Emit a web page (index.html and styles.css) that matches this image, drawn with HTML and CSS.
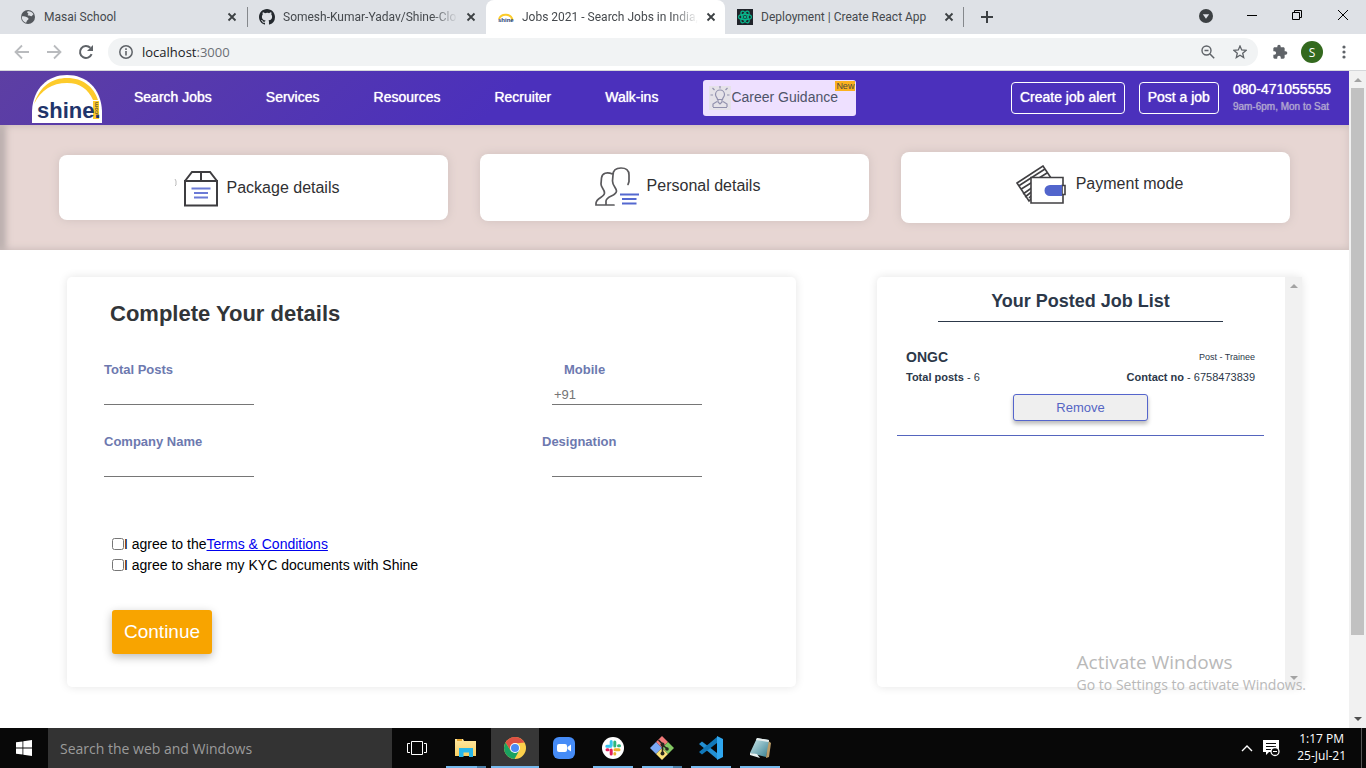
FILE: index.html
```html
<!DOCTYPE html>
<html lang="en">
<head>
<meta charset="utf-8">
<title>Jobs 2021 - Search Jobs in India</title>
<link rel="stylesheet" href="styles.css">
</head>
<body>
<svg class="defs" aria-hidden="true">
  <symbol id="close" viewBox="0 0 10 10"><path d="M1.5 1.5l7 7M8.500 1.500l-7 7" stroke="#3c4043" stroke-width="1.800" fill="none"/></symbol>
  <linearGradient id="note" x1="0" y1="0" x2="1" y2="1"><stop offset="0" stop-color="#d3eef0"/><stop offset="1" stop-color="#387f90"/></linearGradient>
  <linearGradient id="folder" x1="0" y1="0" x2="0" y2="1"><stop offset="0" stop-color="#ffe9a2"/><stop offset="1" stop-color="#f7cf62"/></linearGradient>
</svg>

<div class="tabs">
  <div class="tab">
    <svg class="tab-icon" viewBox="0 0 16 16"><circle cx="8" cy="8" r="7" fill="#54585d"/><path d="M1.800 7.500c1.500-.6 3.200-.3 4.700.5 1.200.6 2 .8 2 2 0 1-1.500 1-1.700 2-.2.800-.3 1.500-1 1.800C3.300 12.800 1.600 10.500 1.800 7.500zM7.500 2.500C9 1.800 12.500 3 13.500 5.500c-1 .2-1 1.200-2 1.700-1 .3-1.800-.7-3-.6-.9 0-1-.9-.3-1.300.7-.5-.2-.9-.7-1.300-.4-.5-.4-1.200 0-1.500z" fill="#dee1e6"/></svg>
    <span class="tab-title">Masai School</span>
    <button class="plain" aria-label="Close tab"><svg class="x"><use href="#close"/></svg></button>
  </div>
  <div class="tab ruled">
    <svg class="tab-icon" viewBox="0 0 16 16"><path fill="#24292e" d="M8 0C3.580 0 0 3.580 0 8c0 3.540 2.290 6.530 5.470 7.590.4.070.55-.17.55-.38 0-.19-.01-.82-.01-1.490-2.010.37-2.530-.49-2.690-.94-.09-.23-.48-.94-.82-1.130-.28-.15-.68-.52-.01-.53.63-.01 1.080.58 1.230.82.72 1.210 1.870.87 2.330.66.070-.52.280-.87.510-1.070-1.780-.2-3.640-.89-3.640-3.950 0-.87.310-1.590.82-2.150-.08-.2-.36-1.020.08-2.120 0 0 .67-.21 2.200.82A7.500 7.500 0 018 3.860c.68 0 1.360.09 2 .27 1.530-1.040 2.200-.82 2.200-.82.44 1.100.16 1.920.08 2.120.51.56.82 1.270.82 2.150 0 3.070-1.870 3.750-3.650 3.950.29.25.54.73.54 1.480 0 1.070-.01 1.930-.01 2.200 0 .21.150.46.550.38A8.010 8.010 0 0016 8c0-4.420-3.580-8-8-8z"/></svg>
    <span class="tab-title fade">Somesh-Kumar-Yadav/Shine-Clo</span>
    <button class="plain" aria-label="Close tab"><svg class="x"><use href="#close"/></svg></button>
  </div>
  <div class="tab active">
    <svg class="tab-icon" viewBox="0 0 16 16"><path d="M1 10a7 6.500 0 0 1 13.500 1" fill="none" stroke="#fbcb2a" stroke-width="2"/><text x="0" y="13" class="mini-logo">shine</text></svg>
    <span class="tab-title fade">Jobs 2021 - Search Jobs in India,</span>
    <button class="plain" aria-label="Close tab"><svg class="x"><use href="#close"/></svg></button>
  </div>
  <div class="tab last">
    <svg class="tab-icon" viewBox="0 0 16 16"><rect width="16" height="16" fill="#20232a"/><g fill="none" stroke="#09b58c" stroke-width="1.200"><ellipse cx="8" cy="8" rx="6.500" ry="2.600"/><ellipse cx="8" cy="8" rx="6.500" ry="2.600" transform="rotate(60 8 8)"/><ellipse cx="8" cy="8" rx="6.500" ry="2.600" transform="rotate(120 8 8)"/></g><circle cx="8" cy="8" r="1.500" fill="#09b58c"/></svg>
    <span class="tab-title">Deployment | Create React App</span>
    <button class="plain" aria-label="Close tab"><svg class="x"><use href="#close"/></svg></button>
  </div>
  <button class="plain new-tab" aria-label="New tab"><svg width="12" height="12" viewBox="0 0 12 12"><path d="M6 0v12M0 6h12" stroke="#3c4043" stroke-width="2"/></svg></button>
  <div class="window-controls">
    <button class="plain" aria-label="Tab search"><svg width="14" height="16" viewBox="0 0 14 16"><circle cx="7" cy="9" r="7" fill="#3c4043"/><path d="M3.800 7.200h6.400L7 11.800z" fill="#dee1e6"/></svg></button>
    <button class="plain" aria-label="Minimize"><svg width="10" height="12" viewBox="0 0 10 12"><path d="M0 6.500h10" stroke="#000"/></svg></button>
    <button class="plain" aria-label="Restore"><svg width="12" height="12" viewBox="0 0 12 12"><path d="M1.500 3.500h7v7h-7zM3.500 3.500v-2h7v7h-2" fill="none" stroke="#000"/></svg></button>
    <button class="plain" aria-label="Close"><svg width="12" height="12" viewBox="0 0 12 12"><path d="M1 1l10 10M11 1L1 11" stroke="#000"/></svg></button>
  </div>
</div>

<div class="toolbar">
  <button class="plain" aria-label="Back"><svg width="16" height="16" viewBox="0 0 16 16"><path d="M15 8H2M8 1.500L1.500 8 8 14.500" fill="none" stroke="#b9bbbe" stroke-width="1.800"/></svg></button>
  <button class="plain" aria-label="Forward"><svg width="16" height="16" viewBox="0 0 16 16"><path d="M1 8h13M8 1.500L14.500 8 8 14.500" fill="none" stroke="#b9bbbe" stroke-width="1.800"/></svg></button>
  <button class="plain" aria-label="Reload"><svg width="16" height="16" viewBox="0 0 16 16"><path d="M13.600 10.200A6 6 0 1 1 12.300 3.800" fill="none" stroke="#5f6368" stroke-width="2"/><path d="M15 1v6H9z" fill="#5f6368"/></svg></button>
  <div class="address">
    <svg width="14" height="14" viewBox="0 0 14 14"><circle cx="7" cy="7" r="6.200" fill="none" stroke="#5f6368" stroke-width="1.500"/><path d="M7 6v4.500M7 3.300v1.600" stroke="#5f6368" stroke-width="1.600"/></svg>
    <span class="url">localhost<span class="port">:3000</span></span>
    <button class="plain" aria-label="Zoom"><svg width="14" height="14" viewBox="0 0 14 14"><circle cx="5.500" cy="5.500" r="4.500" fill="none" stroke="#5f6368" stroke-width="1.400"/><path d="M3.500 5.500h4M9 9l4.200 4.200" stroke="#5f6368" stroke-width="1.500"/></svg></button>
    <button class="plain" aria-label="Bookmark"><svg width="14" height="14" viewBox="0 0 14 14"><path d="M7 1l1.700 4 4.300.4-3.300 2.800 1 4.300L7 10.200l-3.700 2.300 1-4.300L1 5.400 5.300 5z" fill="none" stroke="#5f6368" stroke-width="1.300"/></svg></button>
  </div>
  <button class="plain" aria-label="Extensions"><svg width="16" height="16" viewBox="0 0 24 24"><path fill="#5f6368" d="M20.500 11H19V7c0-1.100-.9-2-2-2h-4V3.500a2.500 2.500 0 0 0-5 0V5H4c-1.100 0-2 .9-2 2v3.800h1.500a2.700 2.700 0 0 1 0 5.400H2V20c0 1.100.9 2 2 2h3.800v-1.500a2.700 2.700 0 0 1 5.400 0V22H17c1.100 0 2-.9 2-2v-4h1.500a2.500 2.500 0 0 0 0-5z"/></svg></button>
  <button class="plain avatar" aria-label="Profile">S</button>
  <button class="plain" aria-label="Menu"><svg width="4" height="14" viewBox="0 0 4 14"><g fill="#5f6368"><circle cx="2" cy="2" r="1.600"/><circle cx="2" cy="7" r="1.600"/><circle cx="2" cy="12" r="1.600"/></g></svg></button>
</div>

<div class="viewport">
  <div class="page">
    <header class="site-header">
      <a href="#" class="logo" aria-label="shine.com"><svg width="70" height="48" viewBox="0 0 70 48"><path d="M0 48V36C1 13 16 0 35 0s34 13 35 36v12z" fill="#fff"/><path d="M2 29C8 11 20 3 35 3c16 0 27 9 31 22h-5C56 14 48 8 35 8 20 8 9 15 2 29z" fill="#fdcb2b"/><rect x="61" y="26" width="6" height="18" fill="#fdcb2b"/><text x="5" y="43" class="logo-word">shine.</text><text class="logo-com" transform="translate(66 41) rotate(-90)">.com</text></svg></a>
      <nav class="nav">
        <a href="#">Search Jobs</a><a href="#">Services</a><a href="#">Resources</a><a href="#">Recruiter</a><a href="#">Walk-ins</a>
      </nav>
      <a href="#" class="career">
        <svg width="22" height="24" viewBox="0 0 22 24"><rect width="22" height="24" fill="#e5e2e8"/><g fill="none" stroke="#9291ad" stroke-width="1.200"><path d="M8.500 13.500c0-2-2-2.500-2-5a4.500 4.500 0 0 1 9 0c0 2.500-2 3-2 5zM9 14v2l2 2 2-2v-2M4 21v-3l4-2.500M18 21v-3l-4-2.500M4 21.500h14M11 0v2.500M3.500 2l2 2M18.500 2l-2 2M1.500 9H4M18 9h2.500"/></g></svg>
        <span class="career-text">Career Guidance</span><span class="new">New</span>
      </a>
      <div class="header-actions">
        <button class="outline">Create job alert</button>
        <button class="outline">Post a job</button>
        <div class="phone"><strong>080-471055555</strong><span>9am-6pm, Mon to Sat</span></div>
      </div>
    </header>

    <section class="steps">
      <div class="step package"><svg width="44" height="40" viewBox="0 0 44 40"><path d="M1 11l1 2v4l-1 1" fill="none" stroke="#bbb"/><g fill="none" stroke="#3e3d40" stroke-width="2"><path d="M11 13h32v24.500H11zM11 13l7-9h18l7 9M27 4v9"/></g><path d="M17.500 20.500h19M20 25h14M20 29.500h14" stroke="#6b7ad6" stroke-width="2"/></svg><span>Package details</span></div>
      <div class="step personal"><svg width="44" height="40" viewBox="0 0 44 40"><g fill="none" stroke="#5a595c" stroke-width="1.700" stroke-linecap="round"><path d="M17.500 7C12 4.500 7 6 6.500 11L6 17c0 4 3.500 5 3.500 9 0 4-8 5-8.500 10v2h18M33 17.500l1-3V8c0-5-3-7-8-7-6 0-8 3-8 7l-.5 6c0 5 4 7 4 10 0 5-10 5-10.500 10v4"/></g><path d="M25 27.500h19M27 32h14.500M27 36.500h14.500" stroke="#5468d0" stroke-width="2"/></svg><span>Personal details</span></div>
      <div class="step payment"><svg width="50" height="40" viewBox="0 0 50 40"><g fill="#fff" stroke="#414043" stroke-width="1.600"><path d="M1 18L27 1l8 12-22 23zM2.500 21L29 4M4.500 24.500L31 8M7 29l10-7M9 32l9-7M13 33l5-5"/><path d="M15 12.500h32v25.500H15z"/><path d="M46 20.500h3v9h-3z"/></g><path d="M46 20v11H34a5.500 5.500 0 0 1 0-11z" fill="#5265cc"/></svg><span>Payment mode</span></div>
    </section>

    <main class="content">
      <form class="details">
        <h1>Complete Your details</h1>
        <div class="fields">
          <div class="field"><label for="posts">Total Posts</label><input id="posts" type="text"></div>
          <div class="field second"><label for="mobile" class="inset">Mobile</label><input id="mobile" type="text" placeholder="+91"></div>
          <div class="field"><label for="company">Company Name</label><input id="company" type="text"></div>
          <div class="field second"><label for="designation">Designation</label><input id="designation" type="text"></div>
        </div>
        <div class="agreements">
          <div class="agree"><input type="checkbox" id="terms"><label for="terms">I agree to the</label><a href="#">Terms &amp; Conditions</a></div>
          <div class="agree"><input type="checkbox" id="kyc"><label for="kyc">I agree to share my KYC documents with Shine</label></div>
        </div>
        <button type="button" class="continue">Continue</button>
      </form>

      <aside class="jobs">
        <div class="jobs-body">
          <h2>Your Posted Job List</h2>
          <article class="job">
            <div class="job-row"><h3>ONGC</h3><span class="post">Post - Trainee</span></div>
            <div class="job-row facts"><span><b>Total posts</b> - 6</span><span><b>Contact no</b> - 6758473839</span></div>
            <button class="remove">Remove</button>
          </article>
        </div>
        <div class="scrollbar muted"><i class="up"></i><i class="down"></i></div>
      </aside>
    </main>
  </div>
  <div class="scrollbar"><i class="up"></i><div class="thumb"></div><i class="down"></i></div>
  <div class="watermark"><p class="watermark-title">Activate Windows</p><p>Go to Settings to activate Windows.</p></div>
</div>

<footer class="taskbar">
  <button class="plain start" aria-label="Start"><svg width="16" height="16" viewBox="0 0 16 16"><path fill="#fff" d="M0 2.300L6.500 1.400v6.200H0zM7.300 1.200L16 0v7.600H7.300zM0 8.400h6.500v6.200L0 13.700zM7.300 8.400H16V16l-8.700-1.200z"/></svg></button>
  <input class="search" type="text" aria-label="Search" placeholder="Search the web and Windows">
  <div class="apps">
    <button class="plain app" aria-label="Task view"><svg width="20" height="16" viewBox="0 0 20 16"><path d="M4.500 1.500h11v13h-11zM3 3.500H.5v9H3M17 3.500h2.500v9H17" fill="none" stroke="#fff"/></svg></button>
    <button class="plain app open stacked" aria-label="File Explorer"><svg width="22" height="20" viewBox="0 0 22 20"><path d="M0 1h8l1 2h12v15H0z" fill="url(#folder)"/><path d="M2 1h5v2H2z" fill="#e5a52d"/><path d="M4 10h14v9h-4v-4.500H8.500V19H4z" fill="#27b7ea"/></svg></button>
    <button class="plain app current" aria-label="Chrome"><svg width="22" height="22" viewBox="0 0 22 22"><circle cx="11" cy="11" r="11" fill="#fcd04b"/><path d="M1.500 5.500A11 11 0 0 1 20.500 5.500L11 6.500l-4.500 7z" fill="#dd5144"/><path d="M1.500 5.500A11 11 0 0 0 10.500 22l5-9-9 .5z" fill="#1aa260"/><circle cx="11" cy="11" r="5" fill="#fff"/><circle cx="11" cy="11" r="4" fill="#4c8bf5"/></svg></button>
    <button class="plain app" aria-label="Zoom"><svg width="22" height="22" viewBox="0 0 22 22"><rect width="22" height="22" rx="6" fill="#468cf7"/><rect x="4" y="7" width="10" height="8" rx="2" fill="#fff"/><path d="M14.500 10L18 7.500v7L14.500 12z" fill="#fff"/></svg></button>
    <button class="plain app open" aria-label="Slack"><svg width="22" height="22" viewBox="0 0 22 22"><circle cx="11" cy="11" r="11" fill="#fff"/><g fill="none" stroke-width="3" stroke-linecap="round"><path d="M9.200 4.500v4M4.800 9.200h4" stroke="#36c5f0"/><path d="M12.800 5v4M16.500 8.800h1" stroke="#2eb67d"/><path d="M13 12.800h4M12.800 16.500v.5" stroke="#ecb22e"/><path d="M9.200 13v4M5 12.800h1" stroke="#e01e5a"/></g></svg></button>
    <button class="plain app open stacked" aria-label="Git"><svg width="24" height="24" viewBox="0 0 24 24"><path d="M12 0l6 6-6 6-6-6z" fill="#f07878"/><path d="M6 6l6 6-6 6-6-6z" fill="#7ba9f4"/><path d="M18 6l6 6-6 6-6-6z" fill="#83c863"/><path d="M12 12l6 6-6 6-6-6z" fill="#fae27a"/><path d="M8.500 4L12.500 8v10M12.500 9l5 4" fill="none" stroke="#27251f" stroke-width="1.600"/><g fill="#27251f"><circle cx="12.500" cy="8.500" r="2"/><circle cx="17" cy="13" r="1.800"/><circle cx="12.500" cy="17.500" r="2"/></g></svg></button>
    <button class="plain app open" aria-label="Visual Studio Code"><svg width="24" height="24" viewBox="0 0 24 24"><path d="M0 8l3-2.500L18 17v6z" fill="#2390d3"/><path d="M0 16l3 2.500L18 7V1z" fill="#1178b9"/><path d="M18 0l6 3v18l-6 3z" fill="#2fa6ee"/></svg></button>
    <button class="plain app open" aria-label="Notepad"><svg width="24" height="22" viewBox="0 0 24 22"><path d="M19 3l4 3-2 14-3 1z" fill="#b99c69"/><path d="M9 1l12 2-3 17L2 16z" fill="url(#note)"/><path d="M9 1l12 2-.3 2L8 3z" fill="#e7ecec"/><path d="M2 16l7 1 3 4-10-3z" fill="#e8f2f2"/></svg></button>
  </div>
  <div class="tray">
    <button class="plain" aria-label="Hidden icons"><svg width="12" height="8" viewBox="0 0 12 8"><path d="M1 7l5-5 5 5" fill="none" stroke="#fff" stroke-width="1.400"/></svg></button>
    <button class="plain" aria-label="Notifications"><svg width="18" height="17" viewBox="0 0 18 17"><path d="M0 0h16v12H6l-3 3v-3H0z" fill="#fff"/><path d="M3 3.500h10M3 6.500h10M3 9.500h5" stroke="#0a0a0a"/><circle cx="12" cy="11.500" r="4" fill="#0a0a0a" stroke="#fff" stroke-width="1.300"/><path d="M10 11.500h4" stroke="#fff"/></svg></button>
    <div class="clock"><span>1:17 PM</span><span>25-Jul-21</span></div>
  </div>
</footer>
</body>
</html>
```

FILE: styles.css
```css
* { box-sizing: border-box; }

body {
  display: flex;
  flex-direction: column;
  height: 100vh;
  margin: 0;
  overflow: hidden;
  background: #fff;
  font-family: "Liberation Sans", Arial, sans-serif;
}

h1, h2, h3, p { margin: 0; }
svg { display: block; flex: none; }
.defs { position: absolute; width: 0; height: 0; }

.plain {
  display: flex;
  align-items: center;
  justify-content: center;
  flex: none;
  padding: 0;
  border: 0;
  background: none;
}

/* Browser tabs */
.tabs {
  display: flex;
  flex: none;
  height: 34px;
  padding-left: 8px;
  background: #dee1e6;
  color: #45494d;
  font: 12px Roboto, sans-serif;
}

.tab {
  display: flex;
  align-items: center;
  flex: 0 1 239px;
  min-width: 0;
  gap: 8px;
  padding: 0 10px 0 12px;
}

.tab.active { background: #fff; border-radius: 8px 8px 0 0; }
.tab.ruled { background: linear-gradient(#85888c, #85888c) left center / 1px 20px no-repeat; }
.tab.last { background: linear-gradient(#85888c, #85888c) right center / 1px 20px no-repeat; }
.tab-icon { width: 16px; height: 16px; }
.tab-title { flex: 1; white-space: nowrap; }
.fade { mask-image: linear-gradient(to right, #000 85%, transparent); }
.x { width: 10px; height: 10px; }
.mini-logo { font: bold 6px "Liberation Sans", sans-serif; fill: #203a70; }
.new-tab { width: 46px; }
.window-controls { display: flex; gap: 34px; align-items: center; height: 30px; margin-left: auto; padding-right: 17px; }

/* Browser toolbar */
.toolbar {
  display: flex;
  align-items: center;
  flex: none;
  gap: 16px;
  height: 37px;
  padding: 0 20px 0 14px;
  border-bottom: 1px solid #d5d7da;
}

.address {
  display: flex;
  align-items: center;
  flex: 1;
  gap: 18px;
  height: 28px;
  margin: 0 -2px;
  padding: 0 11px;
  border-radius: 14px;
  background: #f1f3f4;
}

.url { flex: 1; margin-left: -9px; font: 13px "Open Sans", sans-serif; color: #202124; }
.port { color: #6b6f74; }
.avatar { width: 22px; height: 22px; margin: 0 3px 0 -3px; border-radius: 50%; background: #33691e; color: #fff; font: 12px "Open Sans", sans-serif; }

/* Scrollable window */
.viewport { display: flex; flex: 1; min-height: 0; position: relative; }
.page { flex: 1; min-width: 0; overflow: hidden; }

.scrollbar {
  display: flex;
  flex-direction: column;
  flex: none;
  align-items: center;
  width: 17px;
  padding: 7px 0;
  background: #f1f1f1;
}

.scrollbar .up, .scrollbar .down { border: 4px solid transparent; flex: none; }
.scrollbar .up { border-top: 0; border-bottom-color: #a3a3a3; }
.scrollbar .down { margin-top: auto; border-bottom: 0; border-top-color: #505050; }
.scrollbar.muted .down { border-top-color: #a3a3a3; }
.thumb { flex: 0 0 85%; width: 13px; margin-top: 6px; background: #c1c1c1; }

/* Site header */
.site-header {
  display: flex;
  align-items: center;
  height: 54px;
  padding: 0 18px 0 32px;
  background: linear-gradient(135deg, #5d3fa3, #4b30bc 38%);
  color: #fff;
  font-size: 14px;
}

.logo { align-self: flex-end; margin-bottom: 2px; }
.logo-word { font: bold 22px "Liberation Sans", sans-serif; fill: #1f356b; }
.logo-com { font: bold 6px "Liberation Sans", sans-serif; fill: #6e5f30; }
.nav { display: flex; gap: 54px; margin: 0 45px 0 32px; padding-bottom: 2px; }
.nav a { color: #fff; text-decoration: none; text-shadow: 0 0 1px #fff; white-space: nowrap; }

.career {
  display: flex;
  align-items: center;
  position: relative;
  width: 153px;
  height: 36px;
  padding-left: 6px;
  border-radius: 3px;
  background: #eee0ff;
  color: #4e5469;
  text-decoration: none;
  white-space: nowrap;
}

.career-text { padding-bottom: 2px; }
.new { position: absolute; top: 1px; right: 1px; padding: 0 1px; background: #fbb11f; color: #4e4a40; font-size: 9px; line-height: 10px; }
.header-actions { display: flex; align-items: center; gap: 14px; margin-left: auto; }
.outline { height: 32px; padding: 0 8px 2px; border: 1px solid #fff; border-radius: 4px; background: none; color: #fff; font: 14px "Liberation Sans", sans-serif; text-shadow: 0 0 1px #fff; }
.phone { display: flex; flex-direction: column; padding-bottom: 1px; line-height: 17px; text-shadow: 0 0 1px currentColor; }
.phone strong { font-weight: 400; }
.phone span { color: #b0a6d0; font-size: 10px; }

/* Step cards */
.steps {
  display: grid;
  grid-template-columns: repeat(3, 1fr);
  align-items: center;
  gap: 32px;
  height: 125px;
  padding: 0 59px;
  background: #e7d6d3;
  box-shadow: inset 0 0 8px #cfc0be, inset 8px 0 8px -4px #a39b9a;
}

.step {
  display: flex;
  align-items: center;
  justify-content: center;
  gap: 8px;
  border-radius: 8px;
  background: #fff;
  box-shadow: 0 0 10px #cfc0be;
  color: #303033;
  font-size: 16px;
}

.package { height: 65px; padding-left: 6px; }
.package svg { margin-right: 1px; }
.personal { height: 67px; padding-bottom: 4px; padding-left: 6px; }
.payment { height: 71px; padding-bottom: 8px; padding-left: 8px; }
.personal svg, .payment svg { margin-top: 2px; }
.payment { gap: 10px; }

/* Main panels */
.content { display: flex; gap: 81px; padding: 27px 47px 40px 67px; }
.details, .jobs { min-height: 410px; border-radius: 5px; box-shadow: 0 0 10px #e4e4e4; }

.details {
  display: flex;
  flex-direction: column;
  flex: 1;
  padding: 24px 45px 33px 37px;
}

.details h1 { padding-left: 6px; color: #323538; font-size: 22px; line-height: 26px; }
.fields { display: grid; grid-template-columns: 438px 160px; row-gap: 28px; margin-top: 34px; }
.field { display: flex; flex-direction: column; align-items: flex-start; color: #6d79af; font-size: 13px; line-height: 18px; }
.field label { font-weight: 700; }
.field label.inset { padding-left: 22px; }

.field input {
  width: 150px;
  height: 22px;
  margin-top: 4px;
  padding: 2px 2px 0;
  border: 0;
  border-bottom: 1px solid #767676;
  background: none;
  font: 13px "Liberation Sans", sans-serif;
}

.field.second input { margin-left: 10px; }
.field input::placeholder { color: #757575; }
.agreements { margin: 57px 0 0 8px; font-size: 14px; line-height: 21px; }
.agree { display: flex; align-items: center; }
.agree input { width: 12px; height: 12px; margin: 0 0 2px; }
.agree a { color: #0000ee; }

.continue {
  align-self: flex-start;
  height: 44px;
  margin: 34px 0 0 8px;
  padding: 0 12px;
  border: 0;
  border-radius: 3px;
  background: #f8a400;
  box-shadow: 0 3px 10px #bbb;
  color: #fff;
  font: 19px "Liberation Sans", sans-serif;
}

.jobs { display: flex; flex: 0 0 425px; color: #2c3849; }
.jobs-body { flex: 1; padding: 13px 21px 13px 20px; }
.jobs h2 { margin: 0 41px; padding-bottom: 9px; border-bottom: 1px solid #2c3849; font-size: 18px; line-height: 22px; text-align: center; }
.job { display: flex; flex-direction: column; margin-top: 25px; padding: 0 9px 14px; border-bottom: 1px solid #5565be; }
.job-row { display: flex; align-items: center; justify-content: space-between; font-size: 11px; line-height: 20px; }
.job h3 { font-size: 14px; }
.post { font-size: 9px; }

.remove {
  align-self: center;
  width: 135px;
  height: 27px;
  margin-top: 7px;
  border: 1px solid #5565cc;
  border-radius: 3px;
  background: #efefef;
  box-shadow: 0 3px 4px #bbb;
  color: #5565c4;
  font: 13px "Liberation Sans", sans-serif;
}

/* Activation notice floats over the window */
.watermark { position: absolute; right: 60px; bottom: 32px; color: #b9b9b9; font: 14px/22px "Open Sans", sans-serif; pointer-events: none; }
.watermark-title { font-size: 19px; line-height: 24px; }

/* Taskbar */
.taskbar { display: flex; flex: none; height: 40px; background: #080808; color: #fff; font-family: "Open Sans", sans-serif; }
.start { width: 48px; }
.search { flex: 0 1 344px; min-width: 0; padding: 0 12px; border: 0; background: #333; font: 14px "Open Sans", sans-serif; }
.search::placeholder { color: #9b9b9b; }
.apps { display: flex; gap: 1px; padding-left: 1px; }
.app { width: 48px; background-repeat: no-repeat; background-position: center bottom; }
.open { background-image: linear-gradient(#76b9ed, #76b9ed); background-size: 40px 2px; }
.stacked { background-image: linear-gradient(to right, #76b9ed 78%, #4c7fa8 78%); }
.current { background: linear-gradient(#76b9ed, #76b9ed) center bottom / 100% 2px no-repeat #373737; }
.tray { display: flex; align-items: center; gap: 10px; margin: 0 4px 0 auto; padding-right: 15px; border-right: 1px solid #555; }
.clock { display: flex; flex-direction: column; margin-left: 6px; padding-bottom: 2px; font-size: 12px; line-height: 17px; text-align: center; }
```
